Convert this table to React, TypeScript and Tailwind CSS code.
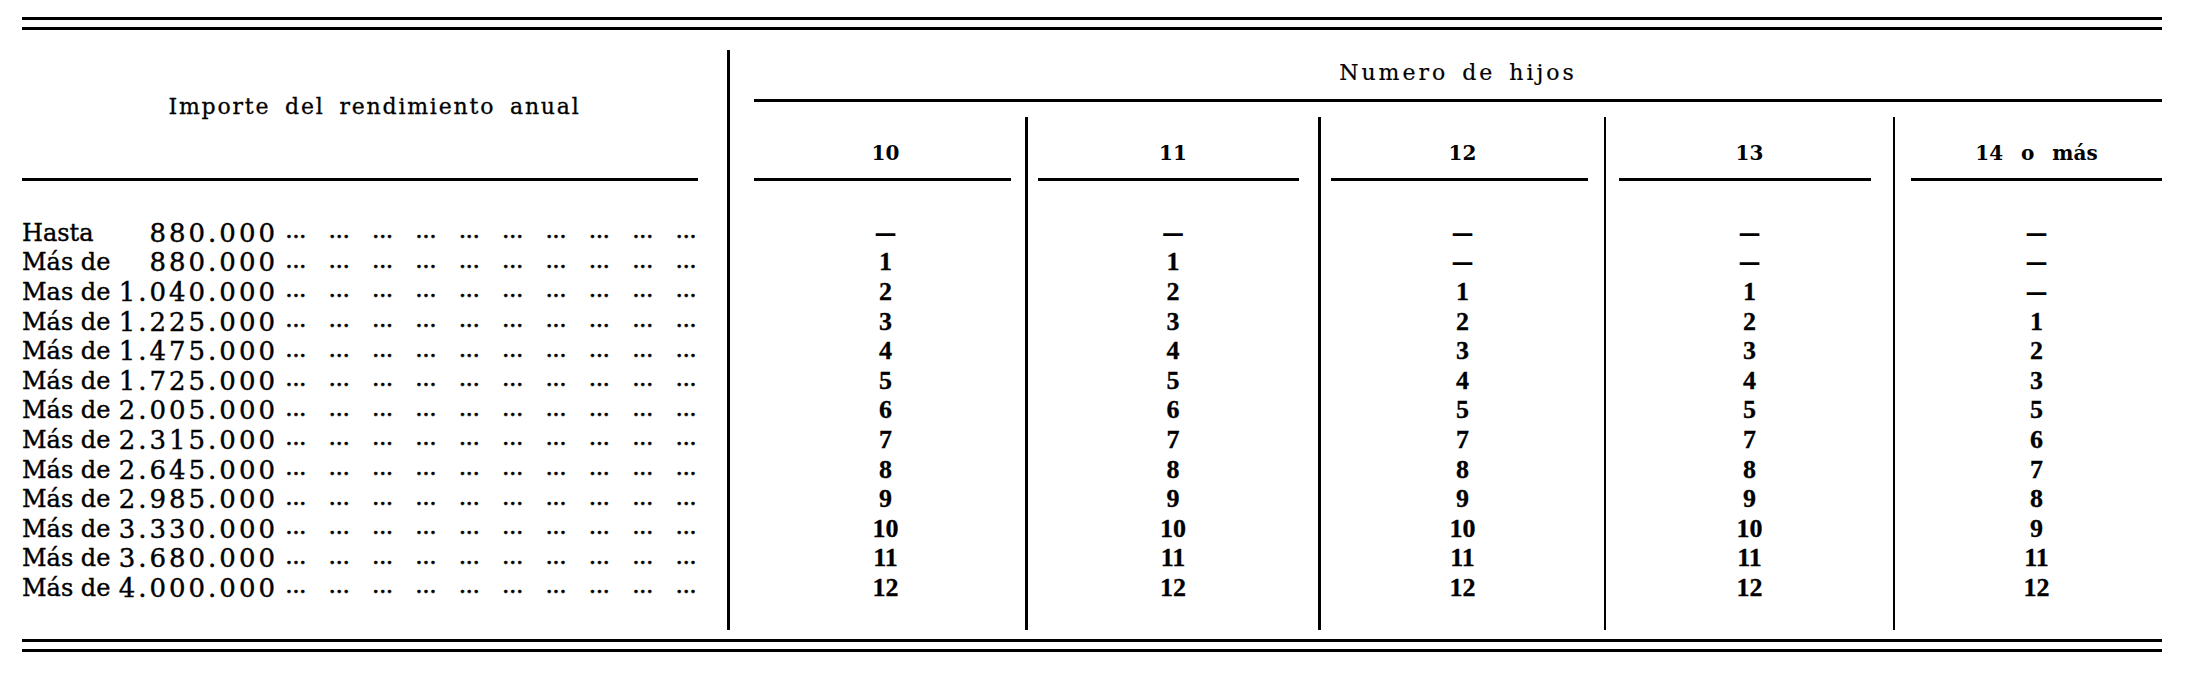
import type { FC } from "react";

type Row = { word: string; amount: string };

const ROWS: Row[] = [
  { word: "Hasta", amount: "880.000" },
  { word: "Más de", amount: "880.000" },
  { word: "Mas de", amount: "1.040.000" },
  { word: "Más de", amount: "1.225.000" },
  { word: "Más de", amount: "1.475.000" },
  { word: "Más de", amount: "1.725.000" },
  { word: "Más de", amount: "2.005.000" },
  { word: "Más de", amount: "2.315.000" },
  { word: "Más de", amount: "2.645.000" },
  { word: "Más de", amount: "2.985.000" },
  { word: "Más de", amount: "3.330.000" },
  { word: "Más de", amount: "3.680.000" },
  { word: "Más de", amount: "4.000.000" },
];

const D = "—";

type Column = {
  label: string;
  values: string[];
  width: string;
  border: string;
  rule: string;
  pad: string;
};

const COLUMNS: Column[] = [
  {
    label: "10",
    values: [D, "1", "2", "3", "4", "5", "6", "7", "8", "9", "10", "11", "12"],
    width: "w-[295px]",
    border: "",
    rule: "ml-[24px] mr-[14px]",
    pad: "pl-[16px]",
  },
  {
    label: "11",
    values: [D, "1", "2", "3", "4", "5", "6", "7", "8", "9", "10", "11", "12"],
    width: "w-[293px]",
    border: "border-l-[3px]",
    rule: "ml-[10px] mr-[19px]",
    pad: "",
  },
  {
    label: "12",
    values: [D, D, "1", "2", "3", "4", "5", "7", "8", "9", "10", "11", "12"],
    width: "w-[286px]",
    border: "border-l-[3px]",
    rule: "ml-[10px] mr-[16px]",
    pad: "",
  },
  {
    label: "13",
    values: [D, D, "1", "2", "3", "4", "5", "7", "8", "9", "10", "11", "12"],
    width: "w-[289px]",
    border: "border-l-[2px]",
    rule: "ml-[13px] mr-[22px]",
    pad: "",
  },
  {
    label: "14 o más",
    values: [D, D, D, "1", "2", "3", "5", "6", "7", "8", "9", "11", "12"],
    width: "flex-1",
    border: "border-l-[2px]",
    rule: "ml-[16px] mr-0",
    pad: "pl-[16px]",
  },
];

const DoubleRule: FC = () => (
  <div className="flex flex-col">
    <div className="h-[3px] bg-black" />
    <div className="h-[3px] bg-black mt-[7px]" />
  </div>
);

const Leaders: FC = () => (
  <div className="flex-1 flex justify-between ml-[8px] mr-[30px] text-[17px] tracking-[1px] font-bold">
    {Array.from({ length: 10 }).map((_, i) => (
      <span key={i}>...</span>
    ))}
  </div>
);

const App: FC = () => {
  return (
    <div className="w-[2186px] h-[676px] bg-white text-black font-['DejaVu_Serif',serif] pl-[22px] pr-[24px] pt-[17px]">
      <DoubleRule />
      <div className="flex h-[609px] pt-[20px] pb-[9px]">
        {/* importe column */}
        <div className="w-[705px] flex flex-col">
          <div className="h-[128px] pb-[16px] flex items-center justify-center text-[22px] tracking-[1.8px] [word-spacing:6px] [-webkit-text-stroke:0.3px]">
            Importe del rendimiento anual
          </div>
          <div className="h-[3px] w-[676px] bg-black" />
          <div className="pt-[37px] flex flex-col">
            {ROWS.map((row, i) => (
              <div
                key={i}
                className="h-[29.6px] flex items-center leading-none [-webkit-text-stroke:0.4px]"
              >
                <span className="w-[92px] text-[24px] whitespace-nowrap">{row.word}</span>
                <span className="w-[164px] text-right text-[26px] tracking-[3px]">{row.amount}</span>
                <Leaders />
              </div>
            ))}
          </div>
        </div>

        {/* numero de hijos */}
        <div className="flex-1 flex flex-col border-l-[3px] border-black">
          <div className="h-[49px] pb-[4px] pl-[24px] flex items-center justify-center text-[22px] tracking-[3px] [word-spacing:4px] [-webkit-text-stroke:0.2px]">
            Numero de hijos
          </div>
          <div className="h-[3px] ml-[24px] bg-black" />
          <div className="flex flex-1 mt-[15px]">
            {COLUMNS.map((col) => (
              <div key={col.label} className={`${col.width} ${col.border} border-black flex flex-col`}>
                <div className={`h-[61px] pt-[10px] ${col.pad} flex items-center justify-center text-[20px] font-bold [word-spacing:11px]`}>
                  {col.label}
                </div>
                <div className={`h-[3px] bg-black ${col.rule}`} />
                <div className={`pt-[37px] ${col.pad} flex flex-col`}>
                  {col.values.map((v, i) =>
                    v === D ? (
                      <div key={i} className="h-[29.6px] flex items-center justify-center text-[22px] font-bold leading-none">
                        {v}
                      </div>
                    ) : (
                      <div
                        key={i}
                        className="h-[29.6px] flex items-center justify-center text-[26px] font-bold leading-none font-['Liberation_Serif',serif] [-webkit-text-stroke:0.3px]"
                      >
                        {v}
                      </div>
                    )
                  )}
                </div>
              </div>
            ))}
          </div>
        </div>
      </div>
      <DoubleRule />
    </div>
  );
};

export default App;
